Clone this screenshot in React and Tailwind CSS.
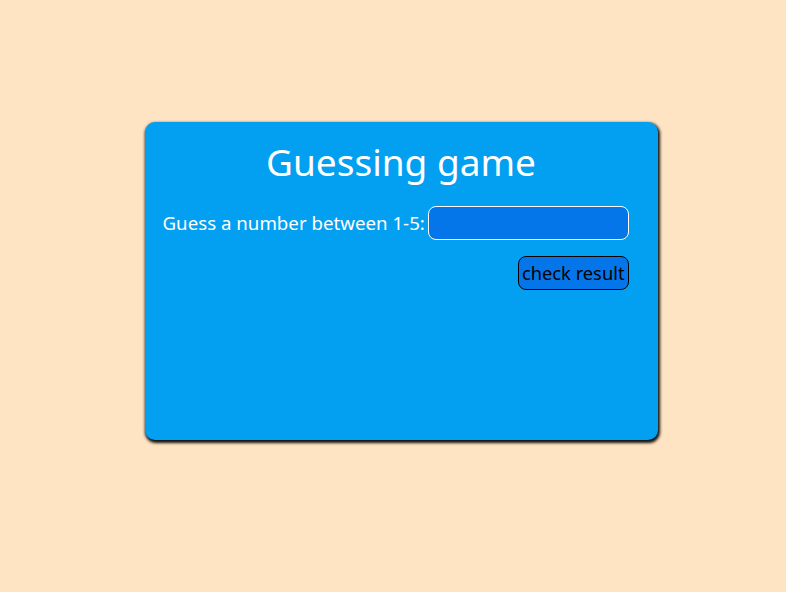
import React from 'react';

const App = () => {
  return (
    <div className="min-h-[592px] w-full bg-[#ffe4c4] flex justify-center pt-[122px] pl-[16px]" style={{ fontFamily: '"Noto Sans", sans-serif' }}>
      <div className="w-[513px] h-[318px] bg-[#03a0f2] rounded-[10px] shadow-[1px_2px_3px_1px_#111] px-[18px] pt-[18px]">
        <h1 className="text-center text-white text-[37px] leading-[43px] font-normal">Guessing game</h1>

        <div className="mt-[23px] flex items-center">
          <label className="text-white text-[18.7px] leading-[34px] whitespace-nowrap">Guess a number between 1-5:</label>
          <input
            type="text"
            className="ml-[3px] w-[201px] h-[34px] rounded-[8px] border border-white bg-[#0576ea] outline-none"
          />
        </div>

        <div className="mt-[16px] flex justify-end pr-[11px]">
          <button className="h-[34px] px-[3px] rounded-[8px] border border-black bg-[#0576ea] text-black text-[18.3px] leading-[30px]">
            check result
          </button>
        </div>
      </div>
    </div>
  );
};

export default App;
